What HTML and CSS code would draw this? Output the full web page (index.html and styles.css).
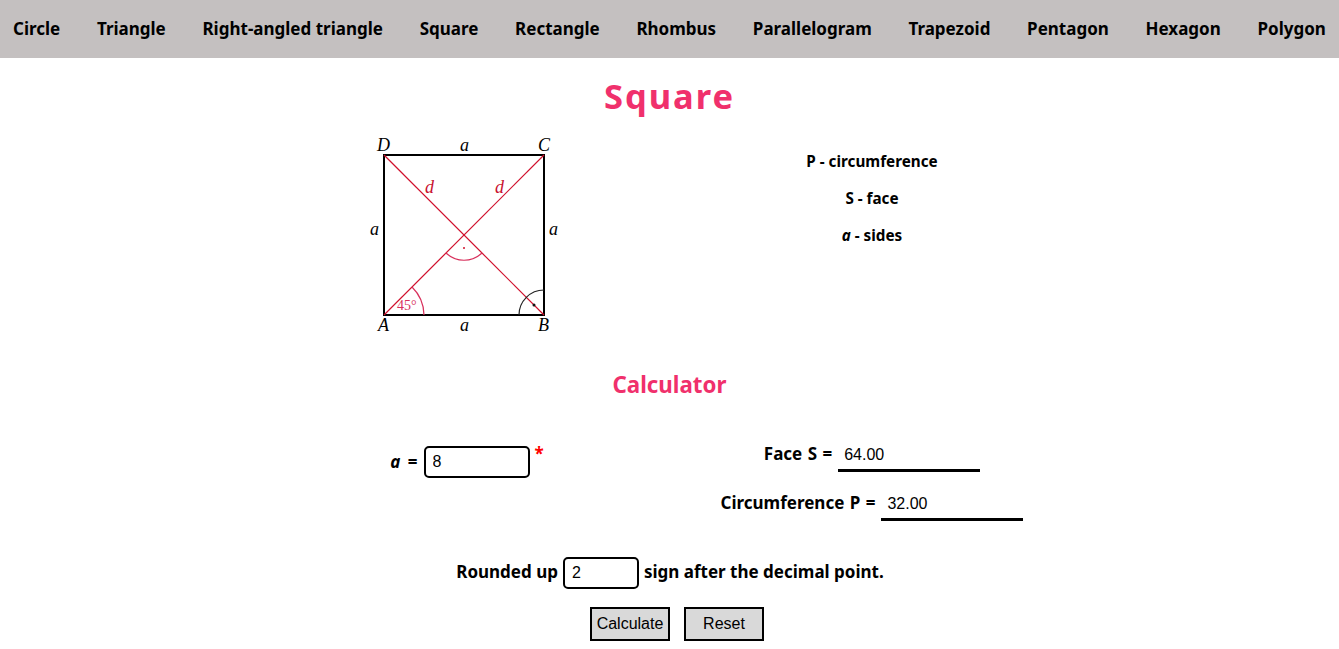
FILE: index.html

```html
<!DOCTYPE html>
<html lang="en">
<head>
    <meta charset="UTF-8">
    <meta name="viewport" content="width=device-width, initial-scale=1.0">
    <title>Square</title>
    <link rel="stylesheet" href="styles.css">
</head>
<body>
    <nav class="menu">
        <a href="#">Circle</a>
        <a href="#">Triangle</a>
        <a href="#">Right-angled triangle</a>
        <a href="#">Square</a>
        <a href="#">Rectangle</a>
        <a href="#">Rhombus</a>
        <a href="#">Parallelogram</a>
        <a href="#">Trapezoid</a>
        <a href="#">Pentagon</a>
        <a href="#">Hexagon</a>
        <a href="#">Polygon</a>
    </nav>

    <h1 class="title">Square</h1>

    <div class="columns info">
        <div class="col">
            <svg class="figure" width="210" height="210" viewBox="0 0 210 210">
                <rect x="24" y="25" width="160" height="160" fill="none" stroke="#000" stroke-width="2"/>
                <line x1="24" y1="185" x2="184" y2="25" stroke="#d0102c" stroke-width="1.2"/>
                <line x1="24" y1="25" x2="184" y2="185" stroke="#d0102c" stroke-width="1.2"/>
                <path d="M52 157 A40 40 0 0 1 64 185" fill="none" stroke="#d8305c" stroke-width="1.2"/>
                <path d="M86 123 A26 26 0 0 0 122 123" fill="none" stroke="#d8305c" stroke-width="1.2"/>
                <path d="M159 185 A25 25 0 0 1 184 160" fill="none" stroke="#222" stroke-width="1.2"/>
                <circle cx="104" cy="118" r="1" fill="#d0102c"/>
                <circle cx="174" cy="175" r="1.5" fill="#111"/>
                <text class="lbl" x="17" y="21">D</text>
                <text class="lbl" x="100" y="21">a</text>
                <text class="lbl" x="178" y="21">C</text>
                <text class="lbl" x="10" y="105">a</text>
                <text class="lbl" x="189" y="105">a</text>
                <text class="lbl" x="18" y="201">A</text>
                <text class="lbl" x="100" y="201">a</text>
                <text class="lbl" x="178" y="201">B</text>
                <text class="lbl red" x="65" y="63">d</text>
                <text class="lbl red" x="135" y="63">d</text>
                <text class="deg" x="37" y="180">45°</text>
            </svg>
        </div>
        <div class="col legend">
            <p>P - circumference</p>
            <p>S - face</p>
            <p><i>a</i> - sides</p>
        </div>
    </div>

    <h2 class="subtitle">Calculator</h2>

    <div class="columns calc">
        <div class="col">
            <div class="field side-field">
                <label for="side"><i>a</i> =</label>
                <input id="side" class="box box-side" type="text" value="8">
                <span class="req">*</span>
            </div>
        </div>
        <div class="col results">
            <div class="field">
                <label>Face S =</label>
                <input class="out" type="text" value="64.00" readonly>
            </div>
            <div class="field">
                <label>Circumference P =</label>
                <input class="out" type="text" value="32.00" readonly>
            </div>
        </div>
    </div>

    <div class="field rounding">
        <label for="digits">Rounded up</label>
        <input id="digits" class="box box-digits" type="text" value="2">
        <label for="digits">sign after the decimal point.</label>
    </div>

    <div class="buttons">
        <button type="button">Calculate</button>
        <button type="button">Reset</button>
    </div>
</body>
</html>
```

FILE: styles.css

```css
html, body {
    margin: 0;
    padding: 0;
}
body {
    font-family: "Noto Sans", "Open Sans", sans-serif;
    font-weight: 700;
    color: #000;
    background: #fff;
}

.menu {
    display: flex;
    justify-content: space-between;
    align-items: center;
    box-sizing: border-box;
    height: 58px;
    padding: 0 13px 1px;
    background-color: #c4c0c0;
}
.menu a {
    color: #000;
    font-size: 17px;
    text-decoration: none;
}

.title {
    margin: 14px 0 0;
    height: 49px;
    line-height: 48px;
    font-size: 34.5px;
    letter-spacing: 2px;
    text-align: center;
    color: #f0306c;
}

.columns {
    display: grid;
    grid-template-columns: 408px 408px;
    justify-content: center;
    padding-right: 1px;
}
.col {
    display: flex;
    flex-direction: column;
    align-items: center;
}

.info {
    margin-top: 9px;
    height: 210px;
}
.figure {
    display: block;
}
.lbl {
    font-family: "Liberation Serif", serif;
    font-style: italic;
    font-weight: 400;
    font-size: 18px;
    fill: #000;
}
.lbl.red {
    fill: #c8102e;
}
.deg {
    font-family: "Liberation Serif", serif;
    font-weight: 400;
    font-size: 14px;
    fill: #d8305c;
}

.legend {
    padding: 21px 2px 0 0;
    box-sizing: border-box;
    font-size: 15.25px;
}
.legend p {
    margin: 0 0 17px;
    line-height: 20px;
}

.subtitle {
    margin: 30px 0 0;
    line-height: 30px;
    font-size: 22.3px;
    text-align: center;
    color: #f0306c;
}

.calc {
    margin-top: 46px;
}
.results {
    gap: 17px;
    margin-top: -9px;
    padding-right: 2px;
}
.field {
    display: flex;
    align-items: center;
    font-size: 17px;
}
.side-field {
    padding-left: 4px;
}
.side-field label {
    padding-bottom: 2px;
    word-spacing: 3px;
}
.results .field {
    height: 32px;
    gap: 6px;
}
.results label {
    padding-top: 1px;
    word-spacing: 1px;
}

.box {
    box-sizing: border-box;
    height: 32px;
    padding: 0 7px;
    font-family: "Liberation Sans", Arial, sans-serif;
    font-size: 16px;
    color: #000;
    background: #fff;
    border: 2px solid #000;
    border-radius: 5px;
    outline: none;
}
.box-side {
    width: 106px;
    margin-left: 6px;
}
.box-digits {
    width: 76px;
    margin: 0 5px;
}
.req {
    align-self: flex-start;
    margin-left: 5px;
    color: #f00;
    line-height: 16px;
}
.out {
    box-sizing: border-box;
    width: 142px;
    height: 35px;
    margin-top: 3px;
    padding: 3px 6px 0;
    font-family: "Liberation Sans", Arial, sans-serif;
    font-size: 16px;
    color: #000;
    border: none;
    border-bottom: 3px solid #000;
    outline: none;
}

.rounding {
    justify-content: center;
    margin-top: 39px;
    padding-left: 1px;
}
.rounding label {
    padding-bottom: 3px;
}

.buttons {
    display: flex;
    justify-content: center;
    gap: 14px;
    margin-top: 18px;
    padding-left: 15px;
}
.buttons button {
    box-sizing: border-box;
    width: 80px;
    height: 34px;
    padding: 0;
    font-family: "Liberation Sans", Arial, sans-serif;
    font-size: 16px;
    color: #000;
    background-color: #d9d9d9;
    border: 2px solid #000;
    cursor: pointer;
}
```
